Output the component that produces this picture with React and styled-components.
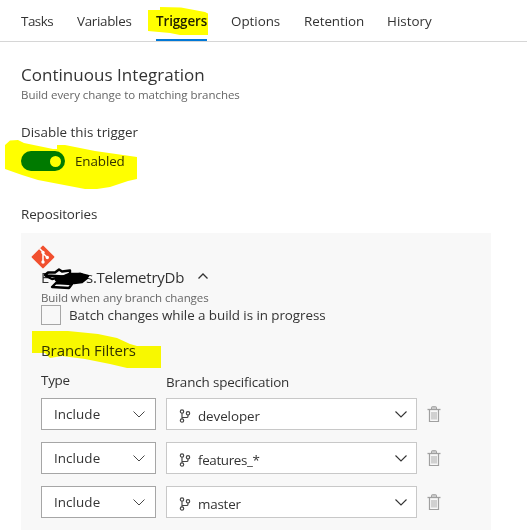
import React from 'react';
import styled, { createGlobalStyle } from 'styled-components';

const GlobalStyle = createGlobalStyle`
  * { box-sizing: border-box; }
  body {
    margin: 0;
    background: #fff;
    font-family: "Open Sans", "Noto Sans", sans-serif;
    font-size: 13.4px;
    line-height: 20px;
    color: #333;
    overflow: hidden;
  }
`;

const Page = styled.div`
  position: relative;
  width: 527px;
  height: 530px;
  overflow: hidden;
  background: #fff;
`;

const TabBar = styled.nav`
  display: flex;
  gap: 24px;
  height: 42px;
  padding: 11px 0 0 21px;
  border-bottom: 1px solid #d6d6d6;
`;

const Tab = styled.div`
  width: ${(p) => p.$width}px;
  height: 30px;
  white-space: nowrap;
  letter-spacing: ${(p) => p.$track || 0}px;
  font-weight: ${(p) => (p.$active ? 600 : 400)};
  color: ${(p) => (p.$active ? '#222' : '#333')};
  border-bottom: 2px solid ${(p) => (p.$active ? '#0078d7' : 'transparent')};
`;

const Content = styled.main`
  padding: 21px 0 0 21px;
`;

const Title = styled.h1`
  margin: 0;
  font-size: 17px;
  line-height: 24px;
  font-weight: 400;
  letter-spacing: 0.03px;
`;

const Hint = styled.div`
  margin-top: ${(p) => p.$gap || 0}px;
  font-size: 11.5px;
  line-height: 16px;
  color: #666;
  letter-spacing: ${(p) => p.$track || 0}px;
`;

const Label = styled.div`
  white-space: nowrap;
  letter-spacing: ${(p) => p.$track || 0}px;
  margin-top: ${(p) => p.$gap || 0}px;
`;

const ToggleRow = styled.div`
  display: flex;
  align-items: center;
  gap: 10px;
  height: 20px;
  margin-top: 9px;
`;

const Toggle = styled.div`
  display: flex;
  align-items: center;
  justify-content: flex-end;
  width: 44px;
  height: 20px;
  padding-right: 4px;
  border-radius: 10px;
  background: #007a00;
`;

const Knob = styled.div`
  width: 11px;
  height: 11px;
  border-radius: 50%;
  background: #fff;
`;

const Panel = styled.section`
  width: 470px;
  height: 297px;
  margin-top: 9px;
  padding: 12px 0 0 20px;
  background: #f8f8f8;
`;

const GitLogo = styled.svg`
  display: block;
  width: 24px;
  height: 24px;
  margin: 0 0 -2px -10px;
`;

const RepoName = styled.div`
  display: flex;
  align-items: center;
  height: 20px;
  font-size: 15px;
  letter-spacing: -0.25px;
`;

const RepoPrefix = styled.span`
  width: 45px;
`;

const Chevron = styled.svg`
  flex: none;
  width: ${(p) => p.$size || 12}px;
  height: 8px;
  margin-left: ${(p) => p.$gap || 0}px;
  fill: none;
  stroke: #333;
  stroke-width: ${(p) => p.$weight || 1};
`;

const CheckRow = styled.div`
  display: flex;
  gap: 8px;
  height: 20px;
  margin-top: -1px;
`;

const CheckBox = styled.div`
  width: 20px;
  height: 20px;
  border: 1px solid #a6a6a6;
`;

const SectionTitle = styled.h2`
  margin: 15px 0 0;
  font-size: 15px;
  line-height: 20px;
  font-weight: 400;
  letter-spacing: -0.08px;
`;

const FilterGrid = styled.div`
  display: grid;
  grid-template-columns: 115px 251px 14px;
  column-gap: 10px;
  row-gap: 12px;
  margin-top: 10px;
`;

const ColumnHead = styled.div`
  grid-column: ${(p) => p.$span || 'auto'};
  height: 16px;
  padding-top: ${(p) => p.$drop || 0}px;
  letter-spacing: ${(p) => p.$track || 0}px;
`;

const Select = styled.div`
  display: flex;
  align-items: center;
  justify-content: space-between;
  height: 32px;
  padding: 0 ${(p) => (p.$wide ? 9 : 10)}px 0 12px;
  border: 1px solid ${(p) => (p.$wide ? '#c8c8c8' : '#a6a6a6')};
  background: #fff;
`;

const Value = styled.span`
  display: flex;
  align-items: center;
  gap: 7px;
  padding-top: ${(p) => (p.$drop ? 4 : 0)}px;
  letter-spacing: ${(p) => p.$track || 0}px;
`;

const BranchGlyph = styled.svg`
  width: 12px;
  height: 14px;
  margin-top: -1px;
  fill: none;
  stroke: #444;
  stroke-width: 1.15;
`;

const TrashGlyph = styled.svg`
  width: 14px;
  height: 18px;
  margin-top: 7px;
  fill: none;
  stroke: #a0a0a0;
`;

const Ink = styled.svg`
  position: absolute;
  left: 0;
  top: 0;
  width: 527px;
  height: 530px;
  pointer-events: none;
  mix-blend-mode: ${(p) => (p.$marker ? 'multiply' : 'normal')};
`;

const tabs = [
  { name: 'Tasks', width: 32, track: -0.5 },
  { name: 'Variables', width: 55, track: -0.3 },
  { name: 'Triggers', width: 51, track: -0.1, active: true },
  { name: 'Options', width: 49, track: -0.03 },
  { name: 'Retention', width: 59, track: -0.06 },
  { name: 'History', width: 45, track: 0.03 },
];

const filters = [
  { branch: 'developer', track: -0.08 },
  { branch: 'features_*', track: -0.35 },
  { branch: 'master', track: -0.2 },
];

function Down({ weight }) {
  return (
    <Chevron $weight={weight} viewBox="0 0 12 8">
      <path d="M.5 1.500 6 7l5.500-5.500" />
    </Chevron>
  );
}

function FilterRow({ branch, track }) {
  return (
    <>
      <Select>
        <Value $track={0.08}>Include</Value>
        <Down weight={0.9} />
      </Select>
      <Select $wide>
        <Value $drop $track={track}>
          <BranchGlyph viewBox="0 0 12 14">
            <circle cx="3" cy="2.500" r="1.700" />
            <circle cx="3" cy="11.500" r="1.700" />
            <circle cx="9" cy="4.300" r="1.700" />
            <path d="M3 4.200v5.600M9 6v1.200Q9 8.500 7.700 8.500H3" />
          </BranchGlyph>
          {branch}
        </Value>
        <Down weight={1.1} />
      </Select>
      <TrashGlyph viewBox="0 0 14 18">
        <path d="M.5 4.500h13" strokeWidth="1.300" />
        <path d="M4.500 4V2.500Q4.500 1.700 5.300 1.700h3.400Q9.500 1.700 9.500 2.500V4" fill="#ccc" />
        <path d="M2.500 5v11.500h9V5" strokeWidth="1.200" />
        <path d="M5 7v7.500M7 7v7.500M9 7v7.500" strokeWidth=".9" />
      </TrashGlyph>
    </>
  );
}

export default function App() {
  return (
    <Page>
      <GlobalStyle />
      <TabBar>
        {tabs.map((t) => (
          <Tab key={t.name} $width={t.width} $track={t.track} $active={t.active}>
            {t.name}
          </Tab>
        ))}
      </TabBar>
      <Content>
        <Title>Continuous Integration</Title>
        <Hint $track={-0.05}>Build every change to matching branches</Hint>
        <Label $gap={19} $track={0.01}>Disable this trigger</Label>
        <ToggleRow>
          <Toggle>
            <Knob />
          </Toggle>
          <Label $track={-0.1}>Enabled</Label>
        </ToggleRow>
        <Label $gap={33} $track={-0.1}>Repositories</Label>
        <Panel>
          <GitLogo viewBox="0 0 24 24">
            <rect x="3.700" y="3.700" width="16.600" height="16.600" rx="1" fill="#f1502f" transform="rotate(45 12 12)" />
            <path d="M8.500 3.500 12 7v10M12 8.200l4.300 4.300" fill="none" stroke="#fff" strokeWidth="1.500" />
            <circle cx="12" cy="7.500" r="1.700" fill="#fff" />
            <circle cx="12" cy="17" r="1.700" fill="#fff" />
            <circle cx="16.300" cy="12.500" r="1.700" fill="#fff" />
          </GitLogo>
          <RepoName>
            <RepoPrefix>E</RepoPrefix>
            s.TelemetryDb
            <Chevron $size={10} $gap={14} $weight={1.3} viewBox="0 0 10 8">
              <path d="M.5 5.500 5 1l4.500 4.500" />
            </Chevron>
          </RepoName>
          <Hint $gap={3} $track={-0.08}>Build when any branch changes</Hint>
          <CheckRow>
            <CheckBox />
            <Label $track={-0.06}>Batch changes while a build is in progress</Label>
          </CheckRow>
          <SectionTitle>Branch Filters</SectionTitle>
          <FilterGrid>
            <ColumnHead $track={-0.25}>Type</ColumnHead>
            <ColumnHead $span="2 / 4" $drop={2} $track={-0.14}>Branch specification</ColumnHead>
            {filters.map((f) => (
              <FilterRow key={f.branch} {...f} />
            ))}
          </FilterGrid>
        </Panel>
      </Content>
      <Ink $marker viewBox="0 0 527 530" fill="#ff0">
        <path d="M148 10h12V7l21 .5 24 4.500 3 1.500V35h-28l-10-2-22-2z" />
        <path d="M5 145l5-4.500 8-.5 6 3 29 6h4v-4h8l30 6 42 6v22l-9 2-18 6-13 2H85l-47-9-16-5-17-6z" />
        <path d="M32 331h36l30 3 19 4 13 6 7 2h24v22h-34l-17-4-25-5-23-3-12 2-5-5H32z" />
      </Ink>
      <Ink viewBox="0 0 527 530" fill="none" stroke="#000" strokeWidth="2.400" strokeLinecap="round" strokeLinejoin="round">
        <path d="M45 275l3-2.500h7l4-3 3 2 8-1v3l-7 3-16-1" />
        <path d="M46 276l6 3 14-3 14-2 8 2" />
        <path d="M62 278l8-4 11 0 6 4-5 4-8 1-12-1-6-2z" fill="#000" />
        <path d="M57 282l-5 5 17 1 3-4-16-1 5-3" />
      </Ink>
    </Page>
  );
}
